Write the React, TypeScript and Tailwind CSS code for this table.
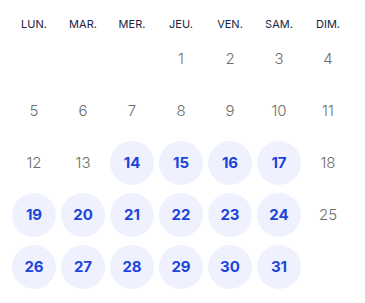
import React from "react";

const days = ["LUN.", "MAR.", "MER.", "JEU.", "VEN.", "SAM.", "DIM."];

const cells: (number | null)[] = [null, null, null];
for (let i = 1; i <= 31; i++) cells.push(i);

const highlighted = new Set([14, 15, 16, 17, 19, 20, 21, 22, 23, 24, 26, 27, 28, 29, 30, 31]);

export default function App() {
  return (
    <div
      className="w-[365px] h-[303px] bg-white px-[12px] pt-[14px]"
      style={{ fontFamily: "'Inter', 'Open Sans', sans-serif" }}
    >
      <div className="grid grid-cols-[repeat(7,44px)] gap-x-[5px] h-5 items-center">
        {days.map((d) => (
          <div key={d} className="text-center text-[11px] text-[#1b2340]">
            {d}
          </div>
        ))}
      </div>
      <div className="mt-[3px] grid grid-cols-[repeat(7,44px)] gap-x-[5px] gap-y-[8px]">
        {cells.map((c, i) =>
          c === null ? (
            <div key={"e" + i} className="h-[44px]" />
          ) : highlighted.has(c) ? (
            <div
              key={c}
              className="h-[44px] w-[44px] rounded-full bg-[#eff2fe] flex items-center justify-center text-[15px] font-bold text-[#1d45d9]"
            >
              {c}
            </div>
          ) : (
            <div
              key={c}
              className="h-[44px] w-[44px] flex items-center justify-center text-[15px] font-light text-[#6e6e6e]"
            >
              {c}
            </div>
          )
        )}
      </div>
    </div>
  );
}
